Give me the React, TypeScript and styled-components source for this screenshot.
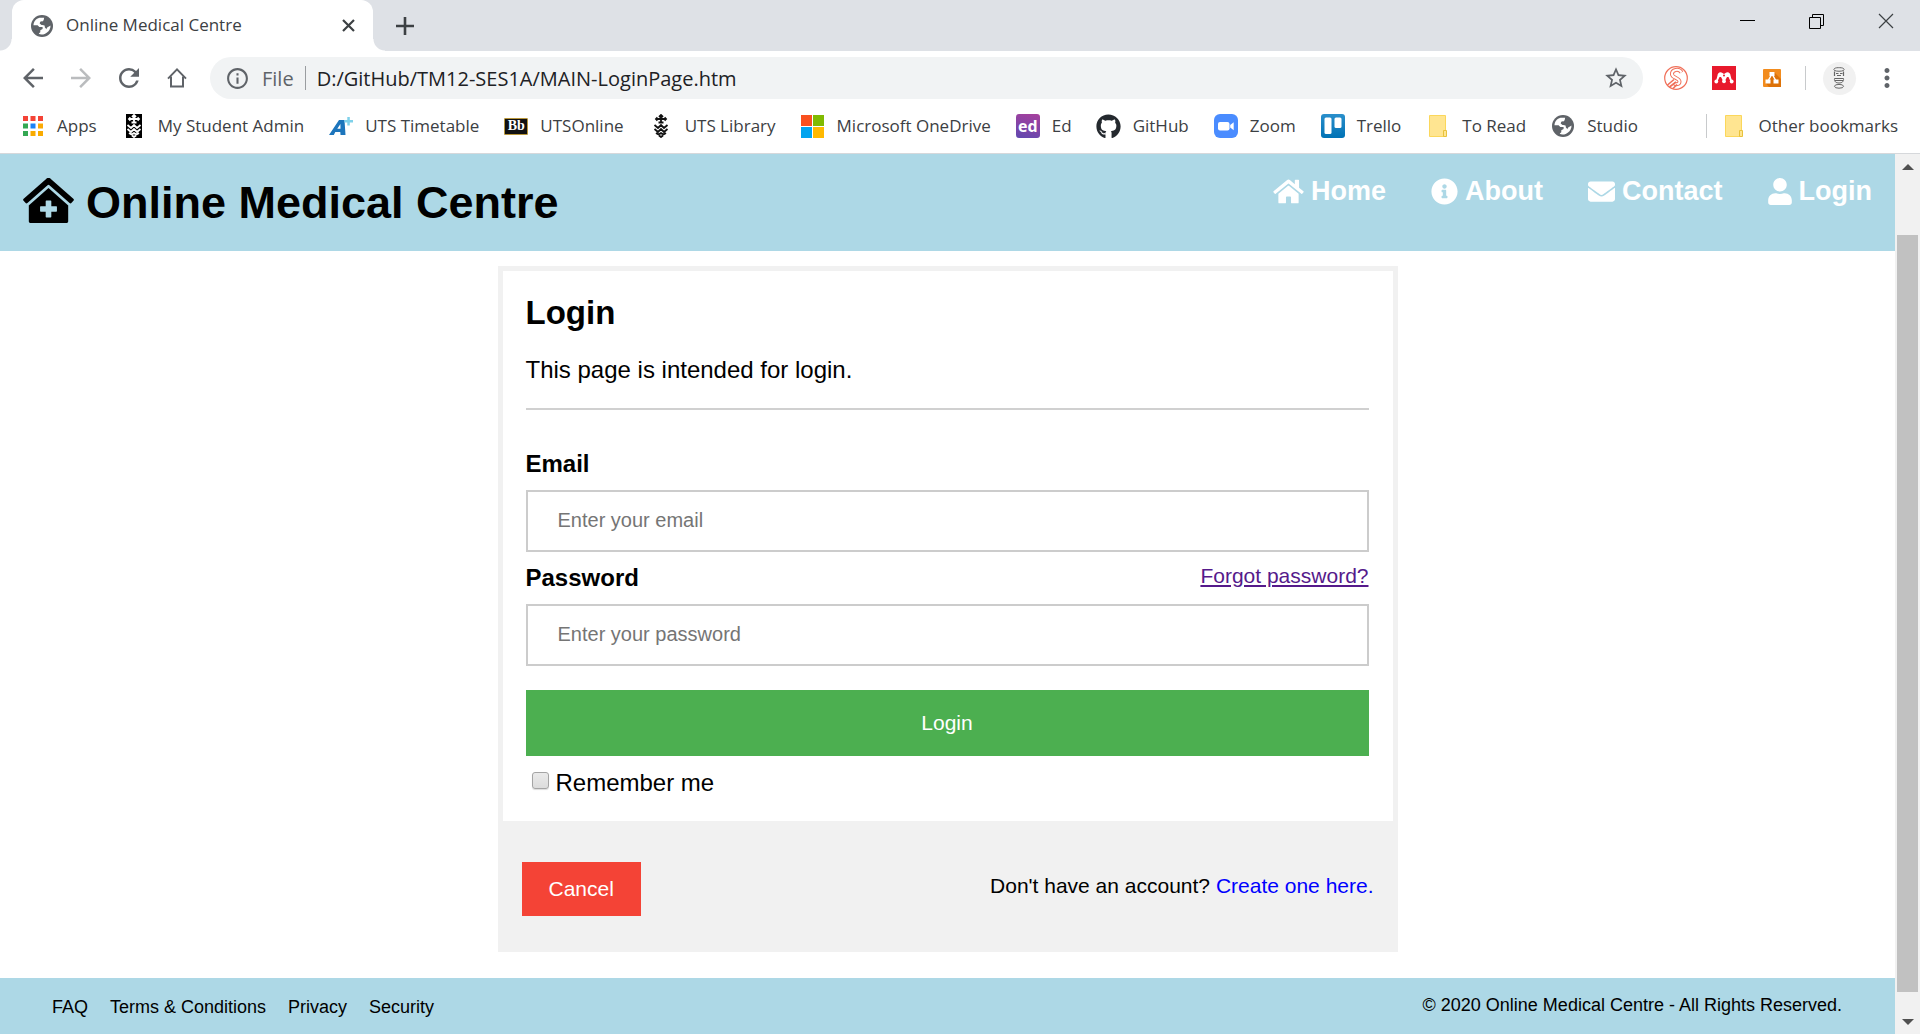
import React from "react";
import styled, { createGlobalStyle } from "styled-components";
import { FaClinicMedical, FaHome, FaInfoCircle, FaEnvelope, FaUser, FaGithub } from "react-icons/fa";
import { MdArrowBack, MdArrowForward, MdRefresh, MdStarBorder, MdMoreVert, MdInfoOutline } from "react-icons/md";

const GlobalStyle = createGlobalStyle`
  *, *::before, *::after { box-sizing: border-box; }
  body { margin: 0; background: #fff; font-family: "Liberation Sans", Arial, sans-serif; color: #000; }
  button { font-family: inherit; border: 0; padding: 0; background: none; cursor: pointer; }
  svg { display: block; flex: none; }
`;

const Browser = styled.div`
  display: flex;
  flex-direction: column;
  height: 100vh;
  overflow: hidden;
`;

const Chrome = styled.div`
  flex: none;
  border-bottom: 1px solid #d6d8db;
  font-family: "Open Sans", "Noto Sans", sans-serif;
  color: #3c4043;
`;

const TabStrip = styled.div`
  display: flex;
  height: 51px;
  padding-left: 12px;
  background: #dee1e6;
`;

const Tab = styled.div`
  position: relative;
  display: flex;
  align-items: center;
  gap: 13px;
  width: 361px;
  padding: 0 13px 0 19px;
  background: #fff;
  border-radius: 12px 12px 0 0;
  font-size: 17px;

  &::before, &::after {
    content: "";
    position: absolute;
    bottom: 0;
    width: 12px;
    height: 12px;
  }
  &::before { right: 100%; background: radial-gradient(circle at 0 0, #dee1e6 11px, #fff 12px); }
  &::after { left: 100%; background: radial-gradient(circle at 100% 0, #dee1e6 11px, #fff 12px); }
`;

const TabTitle = styled.span`
  flex: 1;
  line-height: 50px;
  height: 51px;
  white-space: nowrap;
`;

const IconButton = styled.button<{ $w?: number; $dim?: boolean }>`
  display: flex;
  align-items: center;
  justify-content: center;
  flex: none;
  width: ${(p) => p.$w ?? 48}px;
  height: 42px;
  color: ${(p) => (p.$dim ? "#babcbe" : "#5f6368")};
`;

const NewTab = styled(IconButton)`
  width: 64px;
  height: 100%;
`;

const WindowControls = styled.div`
  display: flex;
  margin-left: auto;
`;

const Toolbar = styled.div`
  display: flex;
  align-items: center;
  height: 54px;
  padding: 0 9px;
`;

const Omnibox = styled.div`
  display: flex;
  align-items: center;
  flex: 1;
  height: 42px;
  margin: 0 9px;
  padding-left: 15px;
  border-radius: 21px;
  background: #f1f3f4;
  font-size: 20px;
`;

const Scheme = styled.span`
  margin-left: 12px;
  color: #5f6368;
`;

const Divider = styled.span<{ $space?: number; $color?: string }>`
  flex: none;
  width: 1px;
  height: 24px;
  margin: 0 ${(p) => p.$space ?? 9}px;
  background: ${(p) => p.$color ?? "#c8cacc"};
`;

const Address = styled.input`
  flex: 1;
  min-width: 0;
  padding: 0;
  border: 0;
  outline: 0;
  background: none;
  font: inherit;
  color: #202124;
`;

const Avatar = styled.span`
  display: flex;
  align-items: center;
  justify-content: center;
  width: 33px;
  height: 33px;
  border-radius: 50%;
  background: #f1f1f1;
`;

const BookmarkBar = styled.nav`
  display: flex;
  align-items: center;
  gap: 25px;
  height: 48px;
  padding: 0 22px 6px 21px;
`;

const Bookmark = styled.a`
  display: flex;
  align-items: center;
  gap: 12px;
  font-size: 17px;
  line-height: 24px;
  white-space: nowrap;
  text-decoration: none;
  color: inherit;
`;

const Slot = styled.span`
  display: flex;
  align-items: center;
  justify-content: center;
  width: 24px;
  height: 24px;
`;

const OtherBookmarks = styled.div`
  display: flex;
  align-items: center;
  margin-left: auto;
`;

const Tile = styled.span<{ $bg: string; $size: number; $gold?: boolean }>`
  display: flex;
  align-items: center;
  justify-content: center;
  width: 24px;
  height: ${(p) => (p.$gold ? 17 : 24)}px;
  border: ${(p) => (p.$gold ? "1px solid #b8963a" : "0")};
  border-radius: ${(p) => (p.$gold ? 1 : 3)}px;
  background: ${(p) => p.$bg};
  color: #fff;
  font: bold ${(p) => p.$size}px ${(p) => (p.$gold ? '"Liberation Serif", serif' : '"Open Sans", sans-serif')};
`;

const Viewport = styled.div`
  display: flex;
  flex: 1;
  min-height: 0;
`;

const Page = styled.div`
  display: flex;
  flex-direction: column;
  flex: 1;
  min-width: 0;
  overflow: hidden;
`;

const Header = styled.header`
  display: flex;
  justify-content: space-between;
  align-items: flex-start;
  flex: none;
  padding: 22px 23px;
  background: lightblue;
`;

const Brand = styled.h1`
  display: flex;
  align-items: center;
  gap: 12px;
  margin: 0;
  font-size: 45px;
  line-height: 53px;

  svg { width: 51px; height: 45px; margin-bottom: 4px; }
`;

const Nav = styled.nav`
  display: flex;
  gap: 45px;
`;

const NavLink = styled.a<{ $icon: number }>`
  display: flex;
  align-items: center;
  gap: 7px;
  font-size: 27px;
  font-weight: bold;
  line-height: 31px;
  text-decoration: none;
  color: #fff;

  svg { width: ${(p) => p.$icon}px; height: 27px; }
`;

const Main = styled.main`
  flex: 1;
  padding: 15px 0;
`;

const Card = styled.form`
  width: 900px;
  max-width: 100%;
  margin: 0 auto;
  border: 5px solid #f1f1f1;
  font-size: 24px;
  line-height: 28px;
`;

const Fields = styled.div`
  padding: 24px 24px 24px 23px;
`;

const Heading = styled.h2`
  margin: 0;
  font-size: 33px;
  line-height: 36px;
`;

const Intro = styled.p`
  margin: 25px 0 24px;
`;

const Rule = styled.hr`
  height: 2px;
  margin: 0 0 40px;
  border: 0;
  background: #d0d0d0;
`;

const LabelRow = styled.div`
  display: flex;
  justify-content: space-between;
  font-weight: bold;
`;

const ForgotLink = styled.a`
  font-size: 21px;
  font-weight: normal;
  line-height: 24px;
  color: #551a8b;
`;

const TextBox = styled.input`
  display: block;
  width: 100%;
  height: 62px;
  margin: 12px 0;
  padding: 0 30px 2px;
  border: 2px solid #ccc;
  background: #fff;
  font: 20px "Liberation Sans", Arial, sans-serif;

  &::placeholder { color: #757575; opacity: 1; }
`;

const Submit = styled.button`
  display: block;
  width: 100%;
  height: 66px;
  margin: 24px 0 13px;
  background: #4caf50;
  color: #fff;
  font-size: 21px;
`;

const Remember = styled.label`
  display: flex;
  align-items: center;
  gap: 7px;
  padding-left: 6px;
`;

const CheckBox = styled.input`
  appearance: none;
  width: 17px;
  height: 17px;
  margin: 0 0 5px;
  border: 1px solid #a4a4a4;
  border-radius: 3px;
  background: linear-gradient(#eaeaea, #dcdcdc);
  box-shadow: 0 1px 1px #ddd;

  &:checked { background: #4c8bf5; }
`;

const CardFooter = styled.div`
  display: flex;
  justify-content: space-between;
  align-items: flex-start;
  padding: 41px 19px 31px;
  background: #f1f1f1;
  font-size: 21px;
`;

const Cancel = styled.button`
  height: 54px;
  padding: 0 27px;
  background: #f44336;
  color: #fff;
  font-size: 21px;
`;

const SignUp = styled.p`
  margin: 10px 0 0;
  a { color: #00f; text-decoration: none; }
`;

const Footer = styled.footer`
  display: flex;
  justify-content: space-between;
  flex: none;
  height: 56px;
  padding: 17px 53px 0 52px;
  background: lightblue;
  font-size: 18px;
  line-height: 21px;
`;

const FooterLinks = styled.div`
  display: flex;
  gap: 22px;
  padding-top: 2px;
  a { color: #000; text-decoration: none; }
`;

const ScrollBar = styled.div`
  display: flex;
  flex-direction: column;
  align-items: center;
  justify-content: space-between;
  flex: none;
  width: 25px;
  padding: 10px 0 9px;
  background: #f1f1f1;
`;

const Thumb = styled.div`
  flex: 1;
  width: 21px;
  margin: 65px 0 27px;
  background: #c1c1c1;
`;

const GlobeIcon = () => (
  <svg width="22" height="22" viewBox="0 0 22 22">
    <circle cx="11" cy="11" r="11" fill="#5f6368" />
    <path d="M8.5 2.8C5 3.6 2.6 6.6 2.5 10.3L6.6 10.3L8.3 11.9L11.6 11.9L11.6 14.1L9.3 15.2L9.3 17.2L7.5 18.8C10.8 20.2 14.2 19.1 16 17.4L16 14.8L13.9 12.6L13.6 10.4L10.2 9.7L8.6 8.2L9.6 6.4L12 6.4L13.2 4.6L13.2 2.7Z" fill="#fff" />
    <path d="M13.2 2.6L15 3.2C17.9 4.8 19.4 7.4 19.4 10.6L17.6 11.4L15.6 10.8L13.4 10L10.2 9.4L9 8.2L10 6.8L12.4 6.4Z" fill="#5f6368" />
    <path d="M19.5 10.6C19.6 13.5 18.2 16 16 17.6L15 14.8L16.2 12.6Z" fill="#fff" />
    <path d="M2.5 11.3L7.8 14.4L8 18.9C4.9 17.8 2.7 14.8 2.5 11.3Z" fill="#5f6368" />
  </svg>
);

const HomeOutline = () => (
  <svg width="22" height="22" viewBox="0 0 22 22" fill="none" stroke="#5f6368" strokeWidth="2">
    <path d="M2 11.6L11 2.4L20 11.6" />
    <path d="M5 9.5V19.6H17V9.5" />
  </svg>
);

const AppsIcon = () => (
  <svg width="20" height="20" viewBox="0 0 20 20">
    {["#f44336", "#f44336", "#f44336", "#34a853", "#1a82f7", "#fbaa05", "#34a853", "#f9ab00", "#f9ab00"].map((c, i) => (
      <rect key={i} x={(i % 3) * 7.5} y={Math.floor(i / 3) * 7.5} width="5" height="5" fill={c} />
    ))}
  </svg>
);

const UtsMark = ({ dark }: { dark?: boolean }) => (
  <svg width="16" height="24" viewBox="0 0 16 24">
    {dark && <rect width="16" height="24" fill="#000" />}
    <g fill="none" stroke={dark ? "#fff" : "#111"} strokeWidth="1.8">
      <path d="M8 1V9M3 5H13M6 3L8 1L10 3M4.500 3.500L3 5L4.500 6.500M11.500 3.500L13 5L11.500 6.500M5.500 8.500H10.500" />
      <path d="M1.500 11L5 14L8 11L11 14L14.500 11M1.500 15L5 18L8 15L11 18L14.500 15M3 19L5.500 20.500L8 19L10.500 20.500L13 19M6 21.500L8 23L10 21.500" />
    </g>
  </svg>
);

const TimetableIcon = () => (
  <svg width="24" height="20" viewBox="0 0 24 20">
    <path fillRule="evenodd" d="M0 19L10 4H15.500L16.500 19H11.500L11.300 16H6.300L4.800 19ZM8.300 12.700H11.500L11.400 8Z" fill="#1c75bc" />
    <path d="M18.300 1H20.800V4H24V6.400H20.800V9.500H18.300V6.400H15.500V4H18.300Z" fill="#7fd1ea" />
  </svg>
);

const MicrosoftIcon = () => (
  <svg width="23" height="23" viewBox="0 0 23 23">
    <path d="M0 0H11V11H0Z" fill="#f9501f" />
    <path d="M12 0H23V11H12Z" fill="#80ba01" />
    <path d="M0 12H11V23H0Z" fill="#02a4ef" />
    <path d="M12 12H23V23H12Z" fill="#ffb901" />
  </svg>
);

const ZoomIcon = () => (
  <svg width="24" height="24" viewBox="0 0 24 24">
    <rect width="24" height="24" rx="6" fill="#4a8cff" />
    <rect x="4" y="8" width="11.500" height="8.500" rx="2" fill="#fff" />
    <path d="M16.200 11L19.700 8.200V16.200L16.200 13.400Z" fill="#fff" />
  </svg>
);

const TrelloIcon = () => (
  <svg width="24" height="24" viewBox="0 0 24 24">
    <defs>
      <linearGradient id="trello" x1="0" y1="0" x2="0" y2="1">
        <stop stopColor="#2a8fcb" />
        <stop offset="1" stopColor="#0072b5" />
      </linearGradient>
    </defs>
    <rect width="24" height="24" rx="3" fill="url(#trello)" />
    <rect x="3.500" y="3.500" width="7" height="16.500" rx="1.500" fill="#fff" />
    <rect x="13.500" y="3.500" width="7" height="10.500" rx="1.500" fill="#fff" />
  </svg>
);

const FolderIcon = () => (
  <svg width="18" height="22" viewBox="0 0 18 22">
    <path d="M0.500 0.500H16.500V21.500H0.500Z" fill="#ffe591" stroke="#fbd75b" />
    <path d="M14.500 21.500V15.500H17.500V21.500Z" fill="#ffe591" stroke="#e8c23c" />
  </svg>
);

const ScribbleIcon = () => (
  <svg width="24" height="24" viewBox="0 0 24 24" fill="none" stroke="#f0705a">
    <circle cx="12" cy="12" r="11.300" strokeWidth="1.200" />
    <path d="M17.500 6.500C15 2 7.500 3.500 8 8.500C8.500 12 15.500 12 15.500 15.500C15.500 18.500 11.500 19 10 17" strokeWidth="4" />
    <path d="M17.500 6.500C15 2 7.500 3.500 8 8.500C8.500 12 15.500 12 15.500 15.500C15.500 18.500 11.500 19 10 17" stroke="#fff" strokeWidth="2" />
    <path d="M3.500 19L10 13.500M5.500 21L12 16M9 22.500L13 18.500" strokeWidth="1.600" />
  </svg>
);

const MendeleyIcon = () => (
  <svg width="24" height="24" viewBox="0 0 24 24">
    <rect width="24" height="24" fill="#e8192c" />
    <g fill="#fff">
      <circle cx="4.300" cy="15.500" r="1.900" />
      <circle cx="12" cy="15.300" r="1.900" />
      <circle cx="19.700" cy="15.500" r="1.900" />
      <path d="M5.500 9.500C5.500 6.500 8.500 5.200 10.500 7L12 8L13.500 7C15.500 5.200 18.500 6.500 18.500 9.500L20 15H18.300L16.500 11H15L12.700 15.500H11.300L9 11H7.500L5.700 15H4Z" />
    </g>
    <circle cx="12" cy="9.500" r="1" fill="#e8192c" />
  </svg>
);

const DiagramIcon = () => (
  <svg width="18" height="18" viewBox="0 0 18 18">
    <rect width="18" height="18" rx="1" fill="#f28c1e" />
    <path d="M11 3L18 10V18H6L3 14.500Z" fill="#dd7208" />
    <path d="M9 5L5 12M9 5L13 12" stroke="#fff" strokeWidth="1.500" />
    <path d="M6.500 3H11.500V7H6.500ZM2.500 10.500H7.500V14.500H2.500ZM10.500 10.500H15.500V14.500H10.500Z" fill="#fff" />
  </svg>
);

const AvatarSketch = () => (
  <svg width="14" height="22" viewBox="0 0 14 22" fill="none" stroke="#666">
    <path d="M2.500 3.500C0.500 1.500 4 0.500 7 0.700C10 0.500 13.500 1.500 11.500 3.500C9 4.500 5 4.500 2.500 3.500Z" />
    <path d="M2.500 4.500V9M11.500 4.500V9M4 6.500H6.500M8 6.500H10.500M5 8.500H9" strokeWidth="1.200" />
    <path d="M2.500 11.500H11.500C12 14.500 10 16 7 16C4 16 2 14.500 2.500 11.500ZM3 13.500H11" />
    <ellipse cx="7" cy="19.300" rx="4.500" ry="1.900" />
  </svg>
);

const Cross = ({ size, width }: { size: number; width: number }) => (
  <svg width={size} height={size} viewBox={`0 0 ${size} ${size}`} stroke="#3c4043" strokeWidth={width}>
    <path d={`M1 1L${size - 1} ${size - 1}M${size - 1} 1L1 ${size - 1}`} />
  </svg>
);

const bookmarks: [string, React.ReactNode][] = [
  ["Apps", <AppsIcon />],
  ["My Student Admin", <UtsMark dark />],
  ["UTS Timetable", <TimetableIcon />],
  ["UTSOnline", <Tile $bg="#111" $size={14} $gold>Bb</Tile>],
  ["UTS Library", <UtsMark />],
  ["Microsoft OneDrive", <MicrosoftIcon />],
  ["Ed", <Tile $bg="linear-gradient(15deg, #6048b0, #a8409c)" $size={16}>ed</Tile>],
  ["GitHub", <FaGithub size={25} color="#24292e" />],
  ["Zoom", <ZoomIcon />],
  ["Trello", <TrelloIcon />],
  ["To Read", <FolderIcon />],
  ["Studio", <GlobeIcon />],
];

const navLinks = [
  { text: "Home", Icon: FaHome, width: 31 },
  { text: "About", Icon: FaInfoCircle, width: 27 },
  { text: "Contact", Icon: FaEnvelope, width: 27 },
  { text: "Login", Icon: FaUser, width: 24 },
];

export default function App() {
  return (
    <Browser>
      <GlobalStyle />
      <Chrome>
        <TabStrip>
          <Tab>
            <GlobeIcon />
            <TabTitle>Online Medical Centre</TabTitle>
            <IconButton $w={24} aria-label="Close tab"><Cross size={13} width={2.2} /></IconButton>
          </Tab>
          <NewTab aria-label="New tab">
            <svg width="18" height="18" viewBox="0 0 18 18" stroke="#3c4043" strokeWidth="2.600">
              <path d="M9 0V18M0 9H18" />
            </svg>
          </NewTab>
          <WindowControls>
            <IconButton $w={69} aria-label="Minimise">
              <svg width="15" height="15" viewBox="0 0 15 15"><path d="M0 6H15V7H0Z" fill="#000" /></svg>
            </IconButton>
            <IconButton $w={69} aria-label="Restore">
              <svg width="15" height="15" viewBox="0 0 15 15" fill="none" stroke="#000">
                <path d="M0.500 3.500H11.500V14.500H0.500ZM3.500 3.500V0.500H14.500V11.500H11.500" />
              </svg>
            </IconButton>
            <IconButton $w={69} aria-label="Close window"><Cross size={16} width={1.2} /></IconButton>
          </WindowControls>
        </TabStrip>
        <Toolbar>
          <IconButton aria-label="Back"><MdArrowBack size={30} /></IconButton>
          <IconButton aria-label="Forward" $dim><MdArrowForward size={30} /></IconButton>
          <IconButton aria-label="Reload"><MdRefresh size={30} /></IconButton>
          <IconButton aria-label="Home"><HomeOutline /></IconButton>
          <Omnibox>
            <MdInfoOutline size={25} color="#5f6368" />
            <Scheme>File</Scheme>
            <Divider $space={11} $color="#9a9da0" />
            <Address aria-label="Address" defaultValue="D:/GitHub/TM12-SES1A/MAIN-LoginPage.htm" />
            <IconButton $w={55} aria-label="Bookmark this page"><MdStarBorder size={26} /></IconButton>
          </Omnibox>
          <IconButton aria-label="Scribble extension"><ScribbleIcon /></IconButton>
          <IconButton aria-label="Mendeley"><MendeleyIcon /></IconButton>
          <IconButton aria-label="Diagrams"><DiagramIcon /></IconButton>
          <Divider />
          <IconButton aria-label="Profile"><Avatar><AvatarSketch /></Avatar></IconButton>
          <IconButton aria-label="Menu"><MdMoreVert size={30} /></IconButton>
        </Toolbar>
        <BookmarkBar>
          {bookmarks.map(([name, icon]) => (
            <Bookmark key={name} href="#"><Slot>{icon}</Slot>{name}</Bookmark>
          ))}
          <OtherBookmarks>
            <Divider $space={15} />
            <Bookmark href="#"><Slot><FolderIcon /></Slot>Other bookmarks</Bookmark>
          </OtherBookmarks>
        </BookmarkBar>
      </Chrome>
      <Viewport>
        <Page>
          <Header>
            <Brand><FaClinicMedical />Online Medical Centre</Brand>
            <Nav>
              {navLinks.map(({ text, Icon, width }) => (
                <NavLink key={text} href="#" $icon={width}><Icon />{text}</NavLink>
              ))}
            </Nav>
          </Header>
          <Main>
            <Card onSubmit={(e) => e.preventDefault()}>
              <Fields>
                <Heading>Login</Heading>
                <Intro>This page is intended for login.</Intro>
                <Rule />
                <LabelRow><label htmlFor="email">Email</label></LabelRow>
                <TextBox id="email" type="text" placeholder="Enter your email" />
                <LabelRow>
                  <label htmlFor="password">Password</label>
                  <ForgotLink href="#">Forgot password?</ForgotLink>
                </LabelRow>
                <TextBox id="password" type="password" placeholder="Enter your password" />
                <Submit type="submit">Login</Submit>
                <Remember><CheckBox type="checkbox" />Remember me</Remember>
              </Fields>
              <CardFooter>
                <Cancel type="button">Cancel</Cancel>
                <SignUp>Don't have an account? <a href="#">Create one here.</a></SignUp>
              </CardFooter>
            </Card>
          </Main>
          <Footer>
            <FooterLinks>
              <a href="#">FAQ</a>
              <a href="#">Terms &amp; Conditions</a>
              <a href="#">Privacy</a>
              <a href="#">Security</a>
            </FooterLinks>
            <span>© 2020 Online Medical Centre - All Rights Reserved.</span>
          </Footer>
        </Page>
        <ScrollBar>
          <svg width="12" height="6" viewBox="0 0 12 6"><path d="M0 6L6 0L12 6Z" fill="#505050" /></svg>
          <Thumb />
          <svg width="12" height="6" viewBox="0 0 12 6"><path d="M0 0L6 6L12 0Z" fill="#505050" /></svg>
        </ScrollBar>
      </Viewport>
    </Browser>
  );
}
